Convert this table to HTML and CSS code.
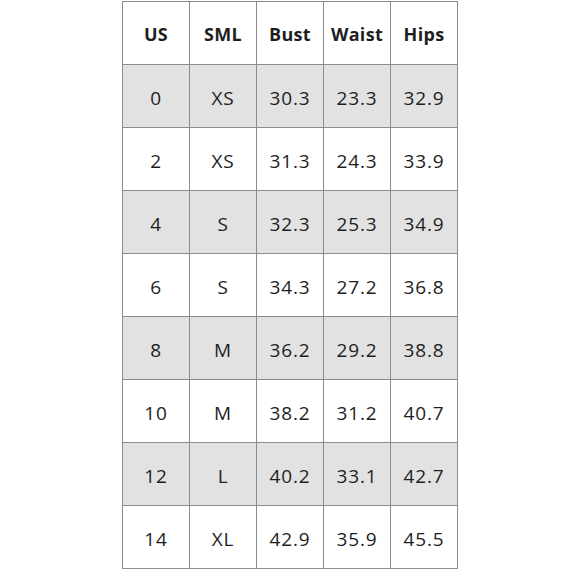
FILE: index.html
```html
<!DOCTYPE html>
<html>
<head>
<meta charset="utf-8">
<link rel="stylesheet" href="styles.css">
</head>
<body>
<div class="wrap">
<table class="size">
<thead>
<tr><th>US</th><th>SML</th><th>Bust</th><th>Waist</th><th>Hips</th></tr>
</thead>
<tbody>
<tr class="alt"><td>0</td><td>XS</td><td>30.3</td><td>23.3</td><td>32.9</td></tr>
<tr><td>2</td><td>XS</td><td>31.3</td><td>24.3</td><td>33.9</td></tr>
<tr class="alt"><td>4</td><td>S</td><td>32.3</td><td>25.3</td><td>34.9</td></tr>
<tr><td>6</td><td>S</td><td>34.3</td><td>27.2</td><td>36.8</td></tr>
<tr class="alt"><td>8</td><td>M</td><td>36.2</td><td>29.2</td><td>38.8</td></tr>
<tr><td>10</td><td>M</td><td>38.2</td><td>31.2</td><td>40.7</td></tr>
<tr class="alt"><td>12</td><td>L</td><td>40.2</td><td>33.1</td><td>42.7</td></tr>
<tr><td>14</td><td>XL</td><td>42.9</td><td>35.9</td><td>45.5</td></tr>
</tbody>
</table>
</div>
</body>
</html>
```
FILE: styles.css
```css
html, body {
  margin: 0;
  padding: 0;
  background: #fff;
}
.wrap {
  display: flex;
  justify-content: center;
  padding-top: 1px;
}
.size {
  border-collapse: collapse;
  font-family: "Open Sans", sans-serif;
  color: #1e1e1e;
}
.size th, .size td {
  border: 1px solid #8c8c8c;
  width: 66px;
  padding: 0;
  text-align: center;
  vertical-align: middle;
}
.size th {
  font-weight: 700;
  font-size: 18px;
  letter-spacing: 0.3px;
  height: 61px;
  padding-top: 1px;
}
.size td {
  font-size: 19px;
  font-weight: 400;
  letter-spacing: 0.8px;
  height: 59px;
  padding-top: 3px;
}
.size tr.alt td {
  background: #e2e2e2;
}
```
